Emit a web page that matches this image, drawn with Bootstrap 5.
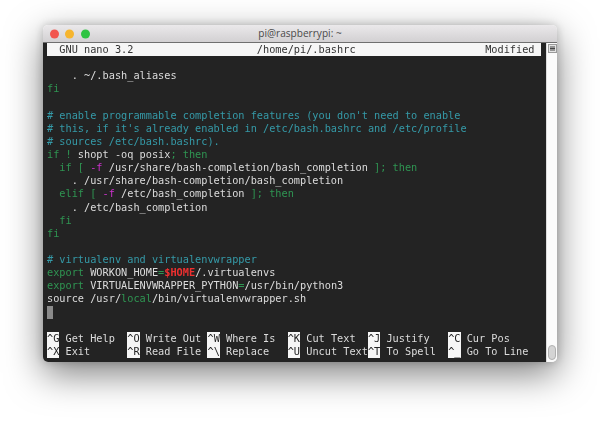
<!DOCTYPE html>
<html lang="en">
<head>
<meta charset="utf-8">
<title>pi@raspberrypi: ~</title>
<link href="https://cdn.jsdelivr.net/npm/bootstrap@5.3.0/dist/css/bootstrap.min.css" rel="stylesheet">
<style>
html,body{height:100%;background:#fff;overflow:hidden}
.stage{padding:25px 43px 0;height:424px}
.win{height:337px;border-radius:5px;overflow:hidden;box-shadow:0 12px 36px rgba(0,0,0,.5),0 0 8px rgba(0,0,0,.2);background:#fff}
.tbar{height:18px;background:linear-gradient(#ebe9eb,#d2d0d2);border-bottom:1px solid #6f6f6f;position:relative}
.lights{left:6.5px;gap:6.5px}
.tl{width:9px;height:9px;border-radius:50%}
.tl-r{background:#f2564f}.tl-y{background:#f6b52e}.tl-g{background:#2fc443}
.ttl{font-family:"Open Sans","Liberation Sans",sans-serif;font-size:10.1px;color:#4a4a4a;line-height:17px}
.body-row{height:319px}
.term{width:503px;background:#232323;padding-left:4px;font-family:"DejaVu Sans Mono",monospace;font-size:10.26px;color:#dcdcdc;filter:blur(.4px)}
.ln{height:13.13px;line-height:13.13px;white-space:pre}
.hd{width:494px;background:#f6f6f6;color:#333}
.c{color:#359aa8}.g{color:#2f9552}.m{color:#cc30cc}.r{color:#ee3030;font-weight:700}
.k{display:inline-block;height:13.13px;vertical-align:top;background:#f6f6f6;color:#222}
.cur{display:inline-block;width:6.2px;height:13.13px;background:#8a8a8a;vertical-align:top}
.side{width:11px;background:#fbfbfb;border-left:1px solid #dcdcdc;padding:1px 0 2px 1px}
.thumb{width:8px;height:15px;border-radius:4px;background:#d4d4d4;border:1px solid #b0b0b0}
</style>
</head>
<body>
<div class="stage">
<div class="win d-flex flex-column">
<div class="tbar d-flex align-items-center justify-content-center">
<div class="lights d-flex position-absolute top-50 translate-middle-y">
<span class="tl tl-r"></span><span class="tl tl-y"></span><span class="tl tl-g"></span>
</div>
<span class="ttl">pi@raspberrypi: ~</span>
</div>
<div class="body-row d-flex">
<div class="term">
<div class="ln hd">  GNU nano 3.2                    /home/pi/.bashrc                     Modified  </div>
<div class="ln"> </div>
<div class="ln">    . ~/.bash_aliases</div>
<div class="ln"><span class="g">fi</span></div>
<div class="ln"> </div>
<div class="ln c"># enable programmable completion features (you don't need to enable</div>
<div class="ln c"># this, if it's already enabled in /etc/bash.bashrc and /etc/profile</div>
<div class="ln c"># sources /etc/bash.bashrc).</div>
<div class="ln"><span class="g">if !</span> shopt -oq posix<span class="g">; then</span></div>
<div class="ln">  <span class="g">if [</span> <span class="m">-f</span> /usr/share/bash-completion/bash_completion <span class="g">]; then</span></div>
<div class="ln">    . /usr/share/bash-completion/bash_completion</div>
<div class="ln">  <span class="g">elif [</span> <span class="m">-f</span> /etc/bash_completion <span class="g">]; then</span></div>
<div class="ln">    . /etc/bash_completion</div>
<div class="ln">  <span class="g">fi</span></div>
<div class="ln"><span class="g">fi</span></div>
<div class="ln"> </div>
<div class="ln c"># virtualenv and virtualenvwrapper</div>
<div class="ln"><span class="g">export</span> WORKON_HOME<span class="g">=</span><span class="r">$HOME</span>/.virtualenvs</div>
<div class="ln"><span class="g">export</span> VIRTUALENVWRAPPER_PYTHON<span class="g">=</span>/usr/bin/python3</div>
<div class="ln">source /usr/<span class="g">local</span>/bin/virtualenvwrapper.sh</div>
<div class="ln"><span class="cur"></span></div>
<div class="ln"> </div>
<div class="ln"><span class="k">^G</span> Get Help  <span class="k">^O</span> Write Out <span class="k">^W</span> Where Is  <span class="k">^K</span> Cut Text  <span class="k">^J</span> Justify   <span class="k">^C</span> Cur Pos</div>
<div class="ln"><span class="k">^X</span> Exit      <span class="k">^R</span> Read File <span class="k">^\</span> Replace   <span class="k">^U</span> Uncut Text<span class="k">^T</span> To Spell  <span class="k">^_</span> Go To Line</div>
</div>
<div class="side d-flex flex-column justify-content-between">
<svg width="9" height="9" viewBox="0 0 9 9"><rect x=".5" y=".5" width="8" height="8" fill="#e4e4e4" stroke="#9a9a9a"/><path d="M2 3h5M2 4.5h5M2 6h5" stroke="#444" fill="none"/></svg>
<div class="thumb"></div>
</div>
</div>
</div>
</div>
<script src="https://cdn.jsdelivr.net/npm/bootstrap@5.3.0/dist/js/bootstrap.bundle.min.js"></script>
</body>
</html>
